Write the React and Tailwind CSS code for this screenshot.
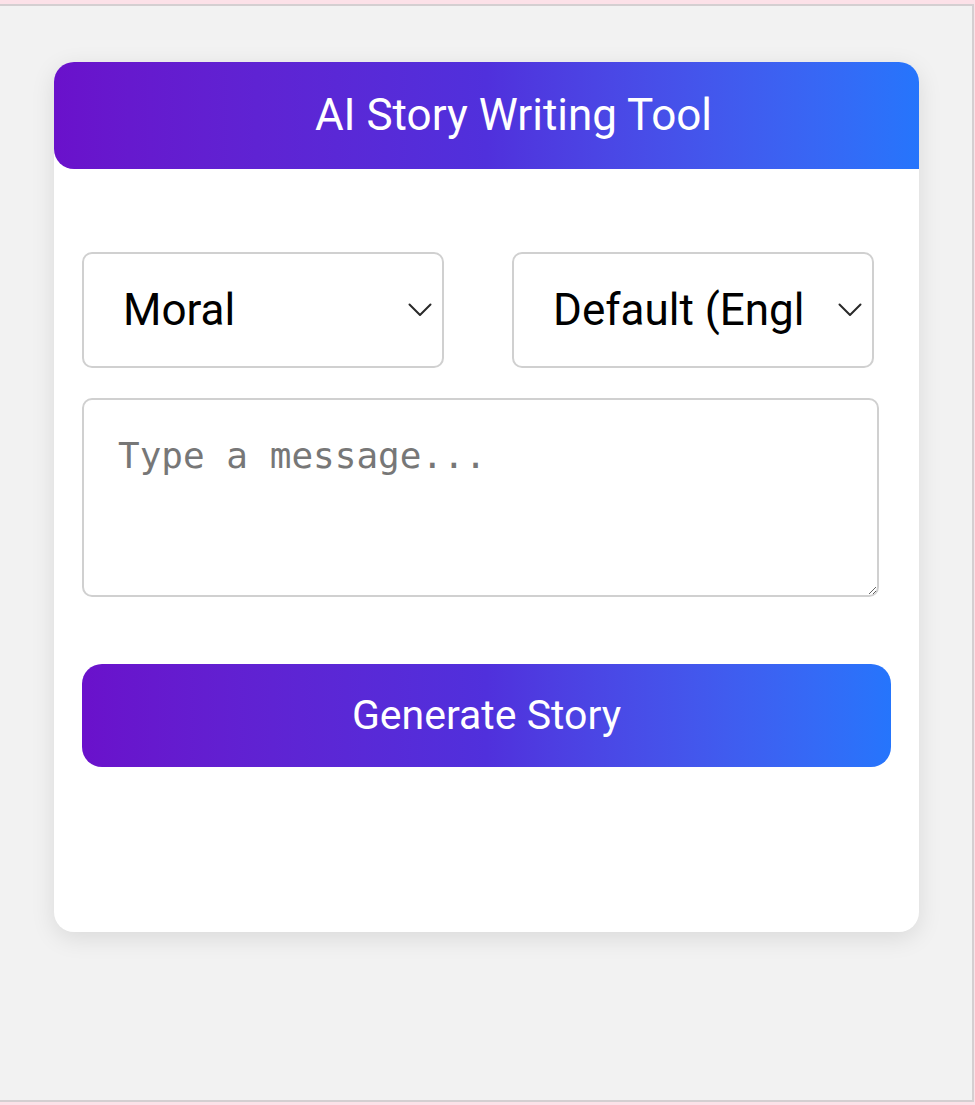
import React from "react";

function Chevron() {
  return (
    <svg width="24" height="14" viewBox="0 0 24 14" fill="none" className="shrink-0">
      <path d="M1.5 1.5 L12 12 L22.5 1.5" stroke="#2a2a2a" strokeWidth="2" strokeLinecap="round" strokeLinejoin="round" />
    </svg>
  );
}

function SelectBox({ label }) {
  return (
    <div className="w-[362px] h-[116px] rounded-[10px] border-2 border-[#d0d0d0] bg-white flex items-center pl-[39px] pr-[10px]">
      <span className="flex-1 text-[44px] leading-[1.25] text-black whitespace-nowrap" style={{ fontFamily: "Roboto, 'Noto Sans', sans-serif" }}>
        {label}
      </span>
      <Chevron />
    </div>
  );
}

export default function App() {
  return (
    <div className="min-h-[1105px] bg-[#fce1e8] pt-[4px]" style={{ fontFamily: "Roboto, 'Noto Sans', sans-serif" }}>
      <div className="w-[974px] h-[1098px] border-t-2 border-r-2 border-b-2 border-[#d4cfd1] bg-[#f2f2f2] pt-[56px] pl-[54px]">
        <div className="w-[865px] h-[870px] rounded-[20px] bg-white shadow-[0_6px_24px_rgba(0,0,0,0.10)]">
          <div className="h-[107px] rounded-t-[20px] rounded-bl-[20px] bg-linear-to-r from-[#6a11cb] via-[#5030dc] to-[#2575fc] flex items-center justify-center pl-[54px]">
            <h1 className="text-white text-[44px] font-normal leading-[1.2]">AI Story Writing Tool</h1>
          </div>
          <div className="px-[28px] pt-[83px]">
            <div className="flex gap-[68px]">
              <SelectBox label="Moral" />
              <SelectBox label="Default (Engl" />
            </div>
            <textarea
              placeholder="Type a message..."
              className="mt-[30px] block w-[797px] h-[199px] rounded-[10px] border-2 border-[#d0d0d0] bg-white px-[34px] pt-[34px] text-[36px] leading-[1.2] text-black placeholder:text-[#777777] outline-none"
              style={{ fontFamily: "'DejaVu Sans Mono', monospace" }}
            />
            <button className="mt-[67px] w-[809px] h-[103px] rounded-[20px] bg-linear-to-r from-[#6a11cb] via-[#5030dc] to-[#2575fc] text-white text-[41px] leading-[1.2]">
              Generate Story
            </button>
          </div>
        </div>
      </div>
    </div>
  );
}
